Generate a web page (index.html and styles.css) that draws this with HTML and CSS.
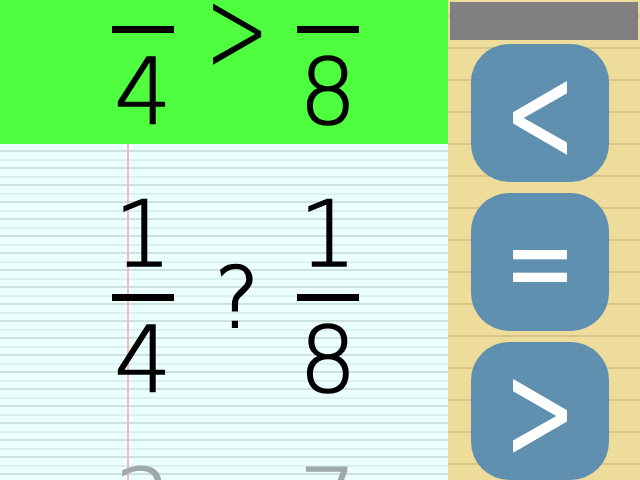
FILE: index.html
```html
<!DOCTYPE html>
<html>
<head>
<meta charset="utf-8">
<link rel="stylesheet" href="styles.css">
</head>
<body>
<div class="app">
  <div class="pad">
    <div class="list">
      <div class="row done">
        <div class="num c1">1</div>
        <div class="bar c1"></div>
        <div class="den c1">4</div>
        <div class="op"><span class="cmp">&gt;</span></div>
        <div class="num c3">1</div>
        <div class="bar c3"></div>
        <div class="den c3">8</div>
      </div>
      <div class="row">
        <div class="num c1">1</div>
        <div class="bar c1"></div>
        <div class="den c1">4</div>
        <div class="op"><span class="q">?</span></div>
        <div class="num c3">1</div>
        <div class="bar c3"></div>
        <div class="den c3">8</div>
      </div>
      <div class="row next">
        <div class="num c1">3</div>
        <div class="bar c1"></div>
        <div class="den c1">4</div>
        <div class="num c3">7</div>
        <div class="bar c3"></div>
        <div class="den c3">8</div>
      </div>
    </div>
  </div>
  <div class="side">
    <div class="status"></div>
    <div class="buttons">
      <button class="btn"><span class="cmp">&lt;</span></button>
      <button class="btn"><span class="eq">=</span></button>
      <button class="btn"><span class="cmp">&gt;</span></button>
    </div>
  </div>
</div>
</body>
</html>
```
FILE: styles.css
```css
html, body {
  margin: 0;
  padding: 0;
  width: 640px;
  height: 480px;
  overflow: hidden;
}
.app {
  display: flex;
  width: 640px;
  height: 480px;
}
.pad {
  width: 448px;
  height: 480px;
  overflow: hidden;
  background:
    linear-gradient(to right, transparent 127px, #f5b8bc 127px, #f5b8bc 129px, transparent 129px),
    repeating-linear-gradient(to bottom, transparent 0, transparent 7px, #dbf0f0 7px, #dbf0f0 9px, transparent 9px, transparent 15px, #cde1df 15px, #cde1df 17px) 0 -1px,
    #ebffff;
}
.list {
  margin-top: -124px;
}
.row {
  height: 268px;
  box-sizing: border-box;
  padding: 46px 0 0 112px;
  display: grid;
  grid-template-columns: 62px 123px 62px;
  grid-template-rows: 90px auto 90px;
  align-content: start;
  font-family: "DejaVu Sans", sans-serif;
  font-weight: 200;
  color: #000;
}
.row.done {
  background: #4fff3f;
}
.row.next {
  color: #9faaa8;
}
.c1 { grid-column: 1; }
.c3 { grid-column: 3; }
.num, .den {
  font-size: 90px;
  line-height: 90px;
  height: 90px;
  -webkit-text-stroke: 1.6px currentColor;
  display: flex;
  justify-content: center;
}
.num { grid-row: 1; }
.den { grid-row: 3; margin-top: 15px; }
.bar {
  grid-row: 2;
  height: 7px;
  margin-top: 14px;
  background: currentColor;
}
.op {
  grid-column: 2;
  grid-row: 2;
  margin-top: 14px;
  height: 7px;
  display: flex;
  align-items: center;
  justify-content: center;
  padding-left: 3px;
  font-size: 76px;
  line-height: 76px;
  -webkit-text-stroke: 0.6px currentColor;
}
.op .q {
  font-size: 84px;
  line-height: 84px;
  -webkit-text-stroke: 2px currentColor;
}
.cmp {
  display: inline-block;
  transform: scaleY(1.6);
}
.side {
  width: 192px;
  height: 480px;
  background:
    repeating-linear-gradient(to bottom, transparent 0, transparent 15px, #d8c689 15px, #d8c689 17px, transparent 17px, transparent 32px),
    #eddc9a;
  display: flex;
  flex-direction: column;
  align-items: flex-start;
  overflow: hidden;
}
.status {
  width: 188px;
  height: 38px;
  margin: 2px 0 0 2px;
  background: #808080;
}
.buttons {
  display: flex;
  flex-direction: column;
  gap: 11px;
  margin: 4px 0 0 23px;
}
.btn {
  width: 138px;
  height: 138px;
  border: none;
  border-radius: 38px;
  background: rgba(70, 130, 180, 0.85);
  color: #fff;
  font-family: "DejaVu Sans", sans-serif;
  font-size: 86px;
  line-height: 1;
  padding: 0;
  display: flex;
  align-items: center;
  justify-content: center;
}
.btn .eq {
  display: inline-block;
  font-size: 86px;
  transform: scaleY(1.3);
}
```
